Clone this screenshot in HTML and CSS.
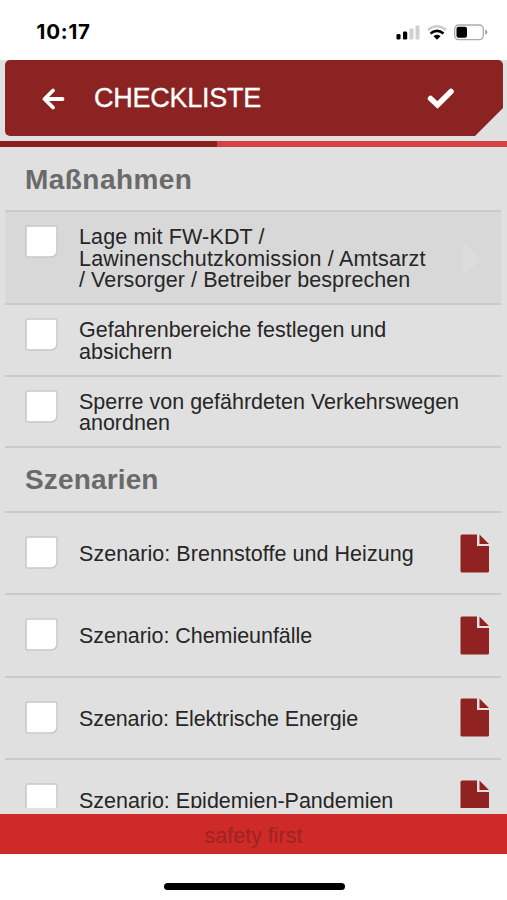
FILE: index.html
```html
<!DOCTYPE html>
<html lang="de">
<head>
<meta charset="utf-8">
<meta name="viewport" content="width=device-width, initial-scale=1">
<title>Checkliste</title>
<link rel="stylesheet" href="styles.css">
</head>
<body>
<svg class="defs" aria-hidden="true">
  <symbol id="box" viewBox="0 0 33 33">
    <path d="M3 1H30Q32 1 32 3V26Q31.500 31.500 26 32H3Q1 32 1 30V3Q1 1 3 1Z" fill="#fff" stroke="#c8c8c8" stroke-width="1.500" stroke-linejoin="round"/>
  </symbol>
  <symbol id="file" viewBox="0 0 30 39">
    <path d="M2 .5H17V12H29V37Q29 38.500 27.500 38.500H2Q.5 38.500 .5 37V2Q.5 .5 2 .5ZM19.500 .5L29 10H19.500Z" fill="#902222"/>
  </symbol>
</svg>
<div class="status">
  <span class="clock">10:17</span>
  <svg class="signals" width="92" height="18" viewBox="0 0 92 18">
    <rect x="0.500" y="10" width="4" height="5.500" rx="1.300"/>
    <rect x="7" y="7.500" width="4.200" height="8" rx="1.300"/>
    <rect x="13.500" y="4.500" width="4" height="11" rx="1" fill="#d0d0d0"/>
    <rect x="19.500" y="1.500" width="4" height="14" rx="1" fill="#d0d0d0"/>
    <g fill="none" stroke-width="2.600">
      <path d="M32 6Q41 -1.500 50 6" stroke="#ccc"/>
      <path d="M34.500 9.500Q41 4.200 47.500 9.500" stroke="#000"/>
    </g>
    <path d="M37.500 12.200Q41 9.500 44.500 12.200L41 15.700Z"/>
    <rect x="58.700" y="1" width="28.600" height="14.600" rx="4" fill="#fff" stroke="#aaa" stroke-width="1.300"/>
    <rect x="60.500" y="2.800" width="10.500" height="11" rx="2"/>
    <path d="M89 5.500Q91.500 6 91.500 8T89 10.500Z" fill="#aaa"/>
  </svg>
</div>
<main class="app">
  <header class="bar">
    <svg class="back" width="24" height="22" viewBox="0 0 24 22"><path d="M12 2.500L3.500 11L12 19.500M4 11H21.500" fill="none" stroke="#fff" stroke-width="3.800" stroke-linecap="round" stroke-linejoin="round"/></svg>
    <h1>CHECKLISTE</h1>
    <svg class="done" width="28" height="22" viewBox="0 0 28 22"><path d="M3.500 10.500L10.500 17L24 3.500" fill="none" stroke="#fff" stroke-width="5.500" stroke-linecap="round"/></svg>
  </header>
  <div class="progress"><div class="progress-fill"></div></div>
  <div class="list">
    <h2>Maßnahmen</h2>
    <div class="row active r3">
      <svg class="box"><use href="#box"/></svg>
      <p><span class="l1">Lage mit FW-KDT /</span><br><span class="l2">Lawinenschutzkomission / Amtsarzt</span><br><span class="l3">/ Versorger / Betreiber besprechen</span></p>
      <svg class="next" width="18" height="34" viewBox="0 0 18 34"><path d="M0 0L18 17L0 34Z" fill="#dcdcdc"/></svg>
    </div>
    <div class="row r2">
      <svg class="box"><use href="#box"/></svg>
      <p>Gefahrenbereiche festlegen und<br>absichern</p>
    </div>
    <div class="row r2">
      <svg class="box"><use href="#box"/></svg>
      <p>Sperre von gefährdeten Verkehrswegen<br>anordnen</p>
    </div>
    <h2 class="second">Szenarien</h2>
    <div class="row scenario">
      <svg class="box"><use href="#box"/></svg>
      <p class="l4">Szenario: Brennstoffe und Heizung</p>
      <svg class="file"><use href="#file"/></svg>
    </div>
    <div class="row scenario">
      <svg class="box"><use href="#box"/></svg>
      <p class="l5">Szenario: Chemieunfälle</p>
      <svg class="file"><use href="#file"/></svg>
    </div>
    <div class="row scenario">
      <svg class="box"><use href="#box"/></svg>
      <p class="l6">Szenario: Elektrische Energie</p>
      <svg class="file"><use href="#file"/></svg>
    </div>
    <div class="row scenario">
      <svg class="box"><use href="#box"/></svg>
      <p>Szenario: Epidemien-Pandemien</p>
      <svg class="file"><use href="#file"/></svg>
    </div>
  </div>
</main>
<footer class="banner">safety first</footer>
<div class="home"><div class="home-bar"></div></div>
</body>
</html>
```
FILE: styles.css
```css
* { box-sizing: border-box; }
body {
  margin: 0;
  width: 507px;
  height: 900px;
  overflow: hidden;
  display: flex;
  flex-direction: column;
  background: #fff;
  color: #262626;
  font-family: "Liberation Sans", Arial, sans-serif;
}
svg { flex: none; display: block; }
.defs { display: none; }
h1, h2, p { margin: 0; }
.status {
  height: 60px;
  flex: none;
  display: flex;
  justify-content: space-between;
  padding: 20px 19px 0 36.500px;
}
.clock {
  font: 700 20.500px/24px Inter, sans-serif;
  letter-spacing: 0.8px;
  color: #000;
}
.signals { margin-top: 4px; }
.app {
  height: 754px;
  flex: none;
  background: #e0e0e0;
  display: flex;
  flex-direction: column;
}
.bar {
  height: 76px;
  flex: none;
  margin: 0 4px 0 5px;
  padding: 0 48px 0 36px;
  display: flex;
  align-items: center;
  background: #8c2323;
  border-radius: 5px;
  clip-path: polygon(0 0, 100% 0, 100% 48px, calc(100% - 28px) 100%, 0 100%);
}
.bar h1 {
  flex: 1;
  margin-left: 29px;
  color: #fff;
  font-size: 27px;
  font-weight: 400;
  line-height: 32px;
  letter-spacing: -0.25px;
  -webkit-text-stroke: 0.3px #fff;
}
.back, .done { margin-top: 2px; }
.progress {
  height: 6px;
  flex: none;
  margin-top: 5px;
  background: #d54242;
}
.progress-fill {
  width: 217px;
  height: 100%;
  background: #8c2020;
}
.list {
  height: 661px;
  flex: none;
  overflow: hidden;
  padding: 0 6px 0 5px;
}
h2 {
  height: 63px;
  padding: 16px 0 0 20px;
  color: #6a6a6a;
  font-size: 28px;
  line-height: 34px;
  letter-spacing: 0.45px;
}
h2.second {
  height: 65px;
  padding-top: 15px;
  border-top: 2px solid #cacaca;
  letter-spacing: 0.15px;
}
.row {
  display: flex;
  align-items: flex-start;
  border-top: 2px solid #cacaca;
  padding: 13px 12px 0 20px;
}
.r3 { height: 93px; }
.r2 { height: 71.500px; }
.active { background: #d8d8d8; }
.box { width: 33px; height: 33px; }
.row p {
  flex: 1;
  margin: 2px 0 0 21px;
  overflow: hidden;
  white-space: nowrap;
  font-size: 21.500px;
  line-height: 21.700px;
}
.l1 { letter-spacing: 0.15px; }
.l2 { letter-spacing: 0.22px; }
.l3 { letter-spacing: 0.08px; }
.l4 { letter-spacing: 0.05px; }
.l5 { letter-spacing: -0.05px; }
.l6 { letter-spacing: -0.1px; }
.next { align-self: center; margin: 0 8px 10px 0; }
.row.scenario { height: 82.300px; padding-top: 23px; }
.row.scenario p { margin-top: 8px; }
.file { width: 30px; height: 39px; margin: -2.500px -1px 0 0; }
.banner {
  height: 40px;
  flex: none;
  background: #ce2a28;
  color: #9c2422;
  font-size: 21.500px;
  line-height: 44px;
  text-align: center;
}
.home {
  flex: 1;
  display: flex;
  justify-content: center;
  padding: 29px 0 0 1px;
}
.home-bar {
  width: 181px;
  height: 7px;
  border-radius: 4px;
  background: #000;
}
```
